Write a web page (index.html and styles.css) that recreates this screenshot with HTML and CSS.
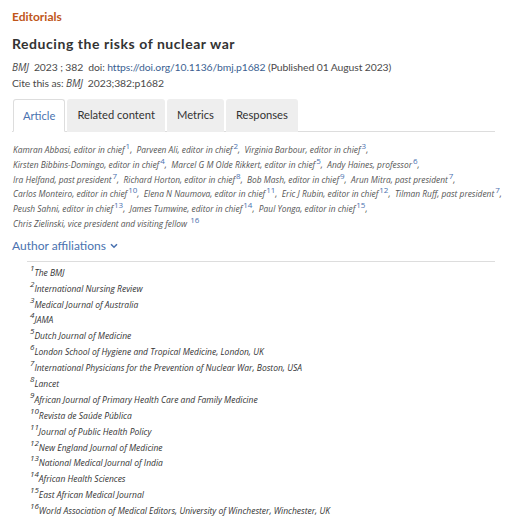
FILE: index.html
```html
<!DOCTYPE html>
<html lang="en">
<head>
    <meta charset="UTF-8">
    <meta name="viewport" content="width=device-width, initial-scale=1.0">
    <title>Reducing the risks of nuclear war</title>
    <link rel="stylesheet" href="styles.css">
</head>
<body>
    <div class="article-header">
        <div class="section">Editorials</div>
        <h1>Reducing the risks of nuclear war</h1>
        <div class="citation">
            <em>BMJ</em>&nbsp; 2023 ; 382 &nbsp;doi: <a href="#">https://doi.org/10.1136/bmj.p1682</a> (Published 01 August 2023)
        </div>
        <div class="citation">Cite this as: <em>BMJ</em>&nbsp; 2023;382:p1682</div>
    </div>

    <ul class="tabs">
        <li class="tab active">Article</li>
        <li class="tab">Related content</li>
        <li class="tab">Metrics</li>
        <li class="tab">Responses</li>
    </ul>

    <div class="authors">
        <div class="author-line">Kamran Abbasi, editor in chief<sup>1</sup>, &nbsp;Parveen Ali, editor in chief<sup>2</sup>, &nbsp;Virginia Barbour, editor in chief<sup>3</sup>,</div>
        <div class="author-line">Kirsten Bibbins-Domingo, editor in chief<sup>4</sup>, &nbsp;Marcel G M Olde Rikkert, editor in chief<sup>5</sup>, &nbsp;Andy Haines, professor<sup>6</sup>,</div>
        <div class="author-line">Ira Helfand, past president<sup>7</sup>, &nbsp;Richard Horton, editor in chief<sup>8</sup>, &nbsp;Bob Mash, editor in chief<sup>9</sup>, &nbsp;Arun Mitra, past president<sup>7</sup>,</div>
        <div class="author-line">Carlos Monteiro, editor in chief<sup>10</sup>, &nbsp;Elena N Naumova, editor in chief<sup>11</sup>, &nbsp;Eric J Rubin, editor in chief<sup>12</sup>, &nbsp;Tilman Ruff, past president<sup>7</sup>,</div>
        <div class="author-line">Peush Sahni, editor in chief<sup>13</sup>, &nbsp;James Tumwine, editor in chief<sup>14</sup>, &nbsp;Paul Yonga, editor in chief<sup>15</sup>,</div>
        <div class="author-line">Chris Zielinski, vice president and visiting fellow <sup>16</sup></div>
    </div>

    <div class="affiliations-toggle">
        Author affiliations
        <svg class="chevron" width="8" height="6" viewBox="0 0 8 6"><path d="M1 1.2 L4 4.2 L7 1.2" fill="none" stroke="#4a72b0" stroke-width="1.6"/></svg>
    </div>

    <ol class="affiliations">
        <li><sup>1</sup>The BMJ</li>
        <li><sup>2</sup>International Nursing Review</li>
        <li><sup>3</sup>Medical Journal of Australia</li>
        <li><sup>4</sup>JAMA</li>
        <li><sup>5</sup>Dutch Journal of Medicine</li>
        <li><sup>6</sup>London School of Hygiene and Tropical Medicine, London, UK</li>
        <li><sup>7</sup>International Physicians for the Prevention of Nuclear War, Boston, USA</li>
        <li><sup>8</sup>Lancet</li>
        <li><sup>9</sup>African Journal of Primary Health Care and Family Medicine</li>
        <li><sup>10</sup>Revista de Saúde Pública</li>
        <li><sup>11</sup>Journal of Public Health Policy</li>
        <li><sup>12</sup>New England Journal of Medicine</li>
        <li><sup>13</sup>National Medical Journal of India</li>
        <li><sup>14</sup>African Health Sciences</li>
        <li><sup>15</sup>East African Medical Journal</li>
        <li><sup>16</sup>World Association of Medical Editors, University of Winchester, Winchester, UK</li>
    </ol>
</body>
</html>
```

FILE: styles.css
```css
body {
    font-family: Lato, 'Open Sans', sans-serif;
    margin: 0;
    padding: 7px 12px 0;
    background-color: #fff;
    color: #333;
}
.section {
    color: #c0561a;
    font-weight: 700;
    font-size: 12px;
    line-height: 20px;
}
h1 {
    font-size: 14px;
    font-weight: 700;
    margin: 7px 0 5px;
    line-height: 20px;
    letter-spacing: 0.55px;
}
.citation {
    font-size: 10.4px;
    letter-spacing: -0.1px;
    line-height: 16px;
    color: #4a4a4a;
}
.citation em {
    font-family: 'Open Sans', sans-serif;
    font-size: 10px;
}
.citation a {
    color: #3c5f92;
    text-decoration: none;
}
.tabs {
    list-style: none;
    display: flex;
    gap: 2px;
    margin: 8px 0 0;
    padding: 0 0 0 1px;
    border-bottom: 1px solid #ddd;
}
.tab {
    background-color: #eee;
    font-size: 11.2px;
    line-height: 32px;
    padding: 0 10px;
    border-radius: 3px 3px 0 0;
    margin-bottom: -1px;
    color: #333;
}
.tab.active {
    background-color: #fff;
    border: 1px solid #ddd;
    border-bottom: 1px solid #fff;
    color: #4a72b0;
    line-height: 31px;
    padding: 0 9px;
}
.authors {
    font-family: 'Open Sans', sans-serif;
    font-size: 8.4px;
    font-style: italic;
    color: #555;
    margin-top: 11px;
    padding-left: 1px;
}
.author-line {
    line-height: 14.8px;
    height: 14.8px;
    white-space: nowrap;
}
.authors sup {
    font-size: 8px;
    color: #4a72b0;
    font-style: normal;
    line-height: 0;
    vertical-align: 4px;
    margin-left: 1px;
}
.affiliations-toggle {
    color: #4a72b0;
    font-size: 12px;
    margin-top: 4px;
    line-height: 20px;
}
.chevron {
    vertical-align: 1px;
    margin-left: 1px;
}
.affiliations {
    list-style: none;
    margin: 5px 0 0 15px;
    padding: 3px 0 0 3px;
    border-top: 1px solid #ddd;
    font-family: 'Open Sans', sans-serif;
    font-size: 8.5px;
    font-style: italic;
    color: #333;
}
.affiliations li {
    line-height: 15.9px;
    height: 15.9px;
}
.affiliations sup {
    font-size: 8px;
    line-height: 0;
    vertical-align: 5px;
}
```
